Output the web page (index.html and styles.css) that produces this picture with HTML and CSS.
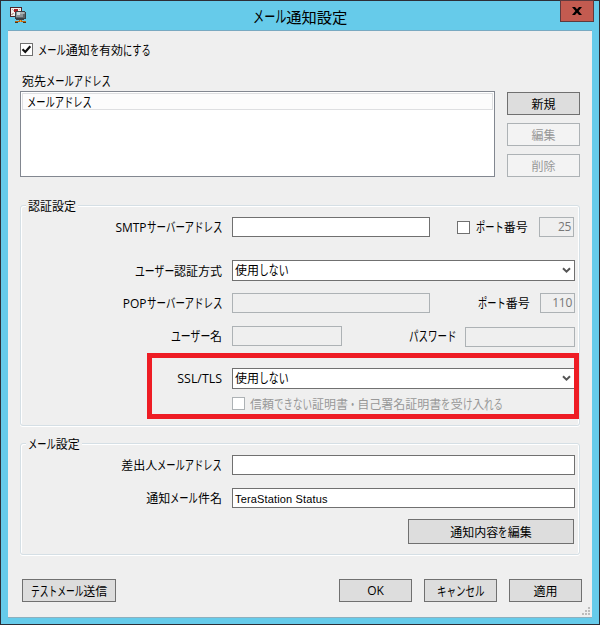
FILE: index.html
```html
<!DOCTYPE html>
<html lang="ja">
<head>
<meta charset="utf-8">
<title>メール通知設定</title>
<link rel="stylesheet" href="styles.css">
</head>
<body>
<div class="window">
  <header class="titlebar">
    <svg class="app-icon" width="16" height="16" viewBox="0 0 16 16" shape-rendering="crispEdges">
      <path fill="#4a2328" d="M0 0h12v10H0z"/>
      <path fill="#f4efeb" d="M1 1h10v8H1z"/>
      <path fill="#c3a5a0" d="M1 7h2v1H1zM2 6h2v1H2zM2 2h1v1H2zM3 3h1v1H3zM9 2h1v1H9z"/>
      <path fill="#a81f25" d="M4 2h4v3H4z"/>
      <path fill="#3a4046" d="M6 4h9v1h1v7h-2v1H6v-1H5V5h1z"/>
      <path fill="#8b9499" d="M6 5h9v6H6z"/>
      <path fill="#d6dddf" d="M7 5h3v3H7z"/>
      <path fill="#aab2b6" d="M10 5h4v2h-4z"/>
      <path fill="#5c656b" d="M6 10h9v1H6zM13 7h2v3h-2z"/>
      <path fill="#bd6715" d="M9 13h3v1h4v1H5v-1h4z"/>
      <path fill="#46351c" d="M5 15h3v1H5zM13 15h3v1h-3z"/>
      <path fill="#f3a42d" d="M10 13h1v2h-1z"/>
    </svg>
    <h1><span class="k n3 tight">メール</span>通知設定</h1>
    <button class="close" aria-label="閉じる"><svg width="10" height="8" viewBox="0 0 10 8"><path d="M0 0h3l2 2.2L7 0h3L6.6 4 10 8H7L5 5.8 3 8H0l3.4-4z"/></svg></button>
  </header>
  <main class="client">
    <label class="check-row"><span class="check"><svg width="11" height="11" viewBox="0 0 11 11"><path d="M1.5 5.2 4.3 8 9.3 2.2" fill="none" stroke="#111" stroke-width="2.2"/></svg></span><span class="t"><span class="k n3">メール</span>通知<span class="k n1">を</span>有効<span class="k n3">にする</span></span></label>
    <div class="t list-label">宛先<span class="k n7">メールアドレス</span></div>
    <div class="recipients">
      <div class="list"><div class="list-head"><span class="t"><span class="k n7">メールアドレス</span></span></div></div>
      <div class="side">
        <button class="btn">新規</button>
        <button class="btn off">編集</button>
        <button class="btn off">削除</button>
      </div>
    </div>

    <section class="group auth">
      <h2 class="legend">認証設定</h2>
      <div class="row smtp">
        <div class="t label"><span class="en">SMTP</span><span class="k n8 wide">サーバーアドレス</span></div>
        <div class="field mid"></div>
        <span class="check port-check"></span>
        <div class="t port-a"><span class="k n3">ポート</span>番号</div>
        <div class="field num off">25</div>
      </div>
      <div class="row method">
        <div class="t label"><span class="k n4 wider">ユーザー</span>認証方式</div>
        <div class="field combo"><span>使用<span class="k n3 wider">しない</span></span><svg width="9" height="7" viewBox="0 0 9 7"><path d="M1 1.2 4.5 4.7 8 1.2" /></svg></div>
      </div>
      <div class="row pop">
        <div class="t label"><span class="en">POP</span><span class="k n8 wide">サーバーアドレス</span></div>
        <div class="field mid off"></div>
        <div class="t port-b"><span class="k n3">ポート</span>番号</div>
        <div class="field num off">110</div>
      </div>
      <div class="row user">
        <div class="t label"><span class="k n4 wider">ユーザー</span>名</div>
        <div class="field small off"></div>
        <div class="t pass"><span class="k n5 wide">パスワード</span></div>
        <div class="field secret off"></div>
      </div>
      <div class="ssl">
        <div class="row">
          <div class="t label"><span class="en protocol">SSL/TLS</span></div>
          <div class="field combo"><span>使用<span class="k n3 wider">しない</span></span><svg width="9" height="7" viewBox="0 0 9 7"><path d="M1 1.2 4.5 4.7 8 1.2" /></svg></div>
        </div>
        <label class="row trust"><span class="check off"></span><span class="t">信頼<span class="k n4 wide">できない</span>証明書<span class="k n1">・</span>自己署名証明書<span class="k n1">を</span>受<span class="k n1 wide">け</span>入<span class="k n2 wide">れる</span></span></label>
      </div>
    </section>

    <section class="group mail">
      <h2 class="legend"><span class="k n3">メール</span>設定</h2>
      <div class="row sender">
        <div class="t label">差出人<span class="k n7">メールアドレス</span></div>
        <div class="field full"></div>
      </div>
      <div class="row subject">
        <div class="t label">通知<span class="k n3">メール</span>件名</div>
        <div class="field full"><span class="subject-text">TeraStation Status</span></div>
      </div>
      <button class="btn edit">通知内容<span class="k n1">を</span>編集</button>
    </section>

    <footer class="actions">
      <button class="btn test"><span class="k n6 tight">テストメール</span>送信</button>
      <button class="btn"><span class="en">OK</span></button>
      <button class="btn"><span class="k n5 wide">キャンセル</span></button>
      <button class="btn">適用</button>
    </footer>
    <svg class="grip" width="8" height="8" viewBox="0 0 8 8" shape-rendering="crispEdges"><path fill="#bcbcbc" d="M6 0h2v2H6zM3 3h2v2H3zM6 3h2v2H6zM0 6h2v2H0zM3 6h2v2H3zM6 6h2v2H6z"/></svg>
  </main>
</div>
</body>
</html>
```

FILE: styles.css
```css
*, *::after { box-sizing: border-box; }
body {
  margin: 0;
  font: 12px/16px "Noto Sans CJK JP", sans-serif;
  color: #000;
}
h1, h2 { margin: 0; font-weight: 400; }
button { font: inherit; color: inherit; padding: 0; }

.window {
  width: 600px;
  height: 625px;
  border: 1px solid #2d2e36;
  padding: 0 7px 7px;
  background: #66cbea;
}
.titlebar {
  position: relative;
  display: flex;
  justify-content: center;
  height: 29px;
}
.titlebar h1 { font-size: 15.3px; line-height: 30px; white-space: nowrap; }
.app-icon { position: absolute; left: 2px; top: 6px; }
.close {
  position: absolute;
  right: -2px;
  top: -1px;
  width: 34px;
  height: 22px;
  display: flex;
  align-items: center;
  justify-content: center;
  border: 1px solid #5e3a3e;
  background: #c35b50;
}

/* Proportional kana: n is the number of characters in the run */
.k {
  --s: .707;
  display: inline-block;
  font-size: 1.09em;
  line-height: 16px;
  white-space: nowrap;
  transform: scaleX(var(--s));
  transform-origin: 0 50%;
  margin-right: calc(var(--n) * (var(--s) - 1) * 1em);
}
.n1 { --n: 1; }
.n2 { --n: 2; }
.n3 { --n: 3; }
.n4 { --n: 4; }
.n5 { --n: 5; }
.n6 { --n: 6; }
.n7 { --n: 7; }
.n8 { --n: 8; }
.tight { --s: .67; }
.wide { --s: .727; }
.wider { --s: .755; }
.en { font-family: "Open Sans", sans-serif; }
.protocol { font-size: 12.4px; }
.t { white-space: nowrap; }

.client {
  position: relative;
  height: 588px;
  padding: 12px 10px 0 12px;
  border-top: 1px solid #79a9c1;
  border-bottom: 1px solid #8db0be;
  background: #efefef;
}
.check-row { display: flex; align-items: center; gap: 5px; height: 13px; }
.check {
  flex: none;
  display: flex;
  width: 13px;
  height: 13px;
  border: 1px solid #707070;
  background: #fff;
}
.check.off { border-color: #adb2b5; }
.list-label { height: 18px; margin: 17px 0 0 2px; line-height: 16px; }
.recipients { display: flex; gap: 12px; }
.list {
  width: 475px;
  height: 86px;
  padding: 1px;
  border: 1px solid #828790;
  background: #fff;
}
.list-head {
  height: 17px;
  padding-left: 4px;
  border: 1px solid #dedfe1;
  background: #fcfcfc;
  line-height: 15px;
}
.side { display: flex; flex-direction: column; gap: 8px; height: 86px; padding-top: 1px; }
.btn {
  flex: none;
  width: 73px;
  height: 23px;
  border: 1px solid #707070;
  background: #ddd;
  text-align: center;
  line-height: 20px;
  white-space: nowrap;
}
.btn.off { border-color: #adb2b5; background: #f3f3f3; color: #989898; }

.group {
  position: relative;
  width: 560px;
  border: 1px solid #d5dfe5;
  border-radius: 3px;
  box-shadow: inset 1px 1px #fff, inset -1px 0 #fff, 0 1px #fff;
}
.legend {
  position: absolute;
  left: 5px;
  top: -9px;
  padding: 0 2px;
  background: #efefef;
  font-size: 12px;
  line-height: 17px;
  white-space: nowrap;
}
.auth { height: 221px; margin-top: 28px; padding-top: 11px; }
.mail { height: 112px; margin-top: 17px; padding-top: 11px; }
.row { display: flex; align-items: center; height: 20px; }
.label { width: 201px; margin-right: 10px; text-align: right; }
.field {
  flex: none;
  height: 20px;
  border: 1px solid #707070;
  background: #fff;
  line-height: 18px;
}
.field.off { border-color: #adb2b5; background: #efefef; }
.mid { width: 198px; }
.small { width: 110px; }
.secret { width: 110px; margin-top: 2px; }
.full { width: 343px; padding-left: 2px; }
.num {
  width: 35px;
  padding-right: 2px;
  color: #777;
  font-family: "Open Sans", sans-serif;
  letter-spacing: -.3px;
  text-align: right;
}
.port-check { margin-left: 27px; }
.port-a { width: 63px; margin-left: 6px; }
.port-b { width: 62px; margin-left: 48px; }
.pass { width: 56px; margin-left: 67px; }
.combo {
  display: flex;
  align-items: center;
  justify-content: space-between;
  width: 343px;
  height: 21px;
  padding: 0 3px 1px 2px;
}
.combo path { fill: none; stroke: #555; stroke-width: 2; }
.method { height: 21px; margin-top: 23px; }
.pop { margin-top: 12px; }
.user { margin-top: 13px; }
.ssl { position: relative; margin-top: 22px; }
.ssl::after {
  content: "";
  position: absolute;
  left: 126px;
  top: -15px;
  width: 432px;
  height: 66px;
  border: 5px solid #ee1c24;
}
.ssl .row { height: 21px; }
.ssl .trust { height: 13px; margin: 8px 0 0 211px; gap: 5px; color: #989898; }
.subject { margin-top: 13px; }
.subject-text { font-family: "Liberation Sans", sans-serif; font-size: 11px; letter-spacing: .15px; }
.edit { display: block; width: 166px; height: 25px; margin: 11px 0 0 387px; line-height: 22px; }
.actions { display: flex; gap: 12px; margin: 24px 0 0 2px; }
.test { width: 94px; margin-right: 211px; }
.grip { position: absolute; right: 2px; bottom: 2px; }
```
